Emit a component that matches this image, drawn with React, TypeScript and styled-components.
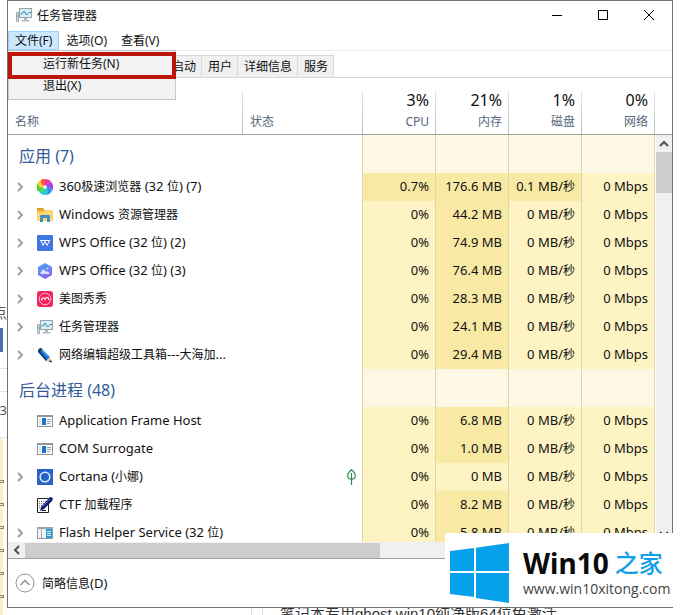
import React from 'react';
import styled, { createGlobalStyle, css } from 'styled-components';

const GlobalStyle = createGlobalStyle`
  * { box-sizing: border-box; }
  body {
    margin: 0;
    background: #fff;
    color: #111;
    font-family: "Noto Sans", "Noto Sans CJK SC", sans-serif;
    font-size: 12px;
  }
  button {
    font: inherit;
    color: inherit;
    background: none;
    border: 0;
    padding: 0;
    margin: 0;
  }
`;

const Page = styled.div`
  position: relative;
  display: grid;
  grid-template-columns: 7px minmax(0, 1fr) 7px;
  grid-template-rows: minmax(0, 1fr) 7px;
  height: 100vh;
  overflow: hidden;
`;

/* Page behind the window */
const BackdropLeft = styled.div`
  grid-row: 1 / 3;
  display: flex;
  flex-direction: column;
  overflow: hidden;
  color: #555;
`;

const Scrap = styled.span<{ $height: number; $size: number }>`
  flex: none;
  display: flex;
  justify-content: flex-end;
  width: 7px;
  height: ${(p) => p.$height}px;
  line-height: ${(p) => p.$height}px;
  font-size: ${(p) => p.$size}px;
`;

const BackdropSpace = styled.div<{ $height: number }>`
  flex: none;
  height: ${(p) => p.$height}px;
`;

const BackdropBlue = styled.div`
  flex: none;
  width: 3px;
  height: 24px;
  background: #4670ae;
`;

const BackdropRule = styled.div<{ $space: number }>`
  flex: none;
  height: 1px;
  margin-bottom: ${(p) => p.$space}px;
  background: #e2e2e2;
`;

const BackdropYellow = styled.div`
  flex: 1;
  display: flex;
  flex-direction: column;
  gap: 22px;
  width: 3px;
  padding-top: 43px;
  background: #fbf1c8;
`;

const YellowMark = styled.div`
  flex: none;
  height: 1px;
  outline: 1px solid #8d8668;
`;

const BackdropBottom = styled.div`
  grid-column: 2 / 4;
  grid-row: 2;
  display: flex;
  overflow: hidden;
  padding-left: 244px;
`;

const BackdropGutter = styled.div`
  flex: none;
  width: 12px;
  border: solid #ddd;
  border-width: 0 1px;
`;

const BackdropText = styled.span`
  margin-left: 17px;
  color: #333;
  font-family: "Liberation Sans", "Noto Sans CJK SC", sans-serif;
  font-size: 15px;
  line-height: 12px;
  white-space: nowrap;
`;

/* Window */
const Window = styled.main`
  grid-column: 2;
  grid-row: 1;
  display: flex;
  flex-direction: column;
  min-height: 0;
  border: 1px solid #6f6f6f;
  background: #fff;
`;

const TitleBar = styled.header`
  flex: none;
  display: flex;
  align-items: center;
  height: 30px;
  padding: 0 0 2px 8px;
`;

const Title = styled.h1`
  flex: 1;
  margin: 0 0 0 5px;
  font-size: 12px;
  font-weight: 400;
`;

const WindowButton = styled.button`
  display: flex;
  align-items: center;
  justify-content: center;
  width: 46px;
  height: 28px;
`;

const MenuBar = styled.nav`
  flex: none;
  position: relative;
  display: flex;
  height: 20px;
  border-bottom: 1px solid #ececec;
`;

const MenuButton = styled.button<{ $open?: boolean }>`
  height: 19px;
  padding: 0 6px;
  line-height: 16px;
  border: 1px solid transparent;
  ${(p) => p.$open && css`
    background: #cce8ff;
    border-color: #99d1ff;
  `}
`;

const Dropdown = styled.div`
  position: absolute;
  z-index: 2;
  top: 19px;
  left: 0;
  display: flex;
  flex-direction: column;
  width: 168px;
  padding: 2px 0;
  background: #f2f2f2;
  border: 1px solid #c8c8c8;
`;

const DropdownItem = styled.button`
  height: 22px;
  padding-left: 34px;
  line-height: 22px;
  text-align: left;
`;

const Highlight = styled.div`
  position: absolute;
  top: 1px;
  left: -1px;
  right: -1px;
  height: 27px;
  border: 4px solid #bd1509;
  pointer-events: none;
`;

const TabStrip = styled.div`
  flex: none;
  display: flex;
  align-items: flex-end;
  height: 27px;
  padding-left: 2px;
  border-bottom: 1px solid #d9d9d9;
`;

const Tab = styled.button<{ $active?: boolean }>`
  height: 22px;
  padding: 0 5px 0 6px;
  line-height: 20px;
  border: solid #d9d9d9;
  border-width: 1px 1px 0 0;
  background: ${(p) => (p.$active ? '#fff' : '#f0f0f0')};
`;

const Body = styled.section`
  flex: 1;
  display: grid;
  grid-template-columns: minmax(0, 1fr) 17px;
  min-height: 0;
  overflow: hidden;
`;

const TableView = styled.div`
  min-height: 0;
  overflow: hidden;
`;

const ProcessTable = styled.table`
  width: 100%;
  table-layout: fixed;
  border-collapse: separate;
  border-spacing: 0;
`;

const StatusCol = styled.col`
  width: 120px;
`;

const MetricCol = styled.col`
  width: 73px;
`;

const HeadCell = styled.th<{ $metric?: boolean }>`
  height: 57px;
  padding: 0 7px 2px;
  vertical-align: bottom;
  text-align: ${(p) => (p.$metric ? 'right' : 'left')};
  color: #56677c;
  font-weight: 400;
  line-height: 20px;
  border-bottom: 1px solid #a0a0a0;
  background: linear-gradient(#e8e8e8, #bcbcbc) right bottom / 1px 43px no-repeat;
`;

const Total = styled.div`
  color: #111;
  font-size: 16px;
  line-height: 24px;
`;

const GroupCell = styled.th`
  height: 38px;
  padding: 4px 0 0 11px;
  text-align: left;
  color: #2f5a9c;
  font-size: 16px;
  font-weight: 400;
  line-height: 24px;
  border-right: 1px solid #ddd5ac;
`;

const NameCell = styled.th`
  height: 28px;
  padding: 0 0 0 8px;
  text-align: left;
  font-size: 13px;
  font-weight: 400;
`;

const NameLine = styled.div`
  display: flex;
  align-items: center;
  white-space: nowrap;
`;

const NameText = styled.span`
  margin: 0 0 2px 6px;
  line-height: 20px;
`;

const Expander = styled.button`
  flex: none;
  display: flex;
  align-items: center;
  width: 21px;
  height: 20px;
`;

const ExpanderSpace = styled.span`
  flex: none;
  width: 21px;
`;

const StatusCell = styled.td`
  padding: 0 6px 0 0;
  line-height: 0;
  text-align: right;
  border-right: 1px solid #ddd5ac;
`;

const shades = { group: '#fdf8e3', low: '#fdf3c3', high: '#f8eaa5' };

const MetricCell = styled.td<{ $shade: keyof typeof shades }>`
  padding: 0 6px 2px 0;
  text-align: right;
  font-size: 13px;
  line-height: 20px;
  white-space: nowrap;
  background: ${(p) => shades[p.$shade]};
  border-right: 1px solid #ddd5ac;
`;

const Han = styled.span`
  font-size: 12px;
`;

const VerticalScroll = styled.div`
  display: flex;
  flex-direction: column;
  min-height: 0;
`;

const ScrollHead = styled.div`
  flex: none;
  height: 57px;
  border-bottom: 1px solid #a0a0a0;
`;

const VerticalTrack = styled.div`
  flex: 1;
  display: flex;
  flex-direction: column;
  margin-left: 1px;
  background: #f0f0f0;
`;

const ScrollArrow = styled.button`
  flex: none;
  display: flex;
  align-items: center;
  justify-content: center;
  width: 16px;
  height: 17px;
`;

const VerticalThumb = styled.div`
  height: 41px;
  margin-bottom: auto;
  background: #cdcdcd;
`;

const HorizontalTrack = styled.div`
  flex: none;
  display: flex;
  align-items: center;
  height: 16px;
  padding: 0 17px 0 1px;
  background: #f0f0f0;
`;

const HorizontalThumb = styled.div`
  width: 55%;
  height: 15px;
  margin-right: auto;
  background: #cdcdcd;
`;

const Footer = styled.footer`
  flex: none;
  display: flex;
  align-items: center;
  height: 49px;
  padding-left: 7px;
  border-top: 1px solid #a0a0a0;
`;

const FewerDetails = styled.button`
  display: flex;
  align-items: center;
  gap: 7px;
  font-size: 13px;
  line-height: 20px;
`;

/* Site badge over the lower right corner */
const SiteBadge = styled.aside`
  position: absolute;
  right: 0;
  bottom: 8px;
  display: flex;
  align-items: center;
  gap: 14px;
  width: 235px;
  height: 74px;
  padding: 6px 0 0 5px;
  background: #fff;
`;

const BadgeText = styled.div`
  display: flex;
  flex-direction: column;
`;

const BadgeName = styled.strong`
  display: flex;
  align-items: center;
  gap: 6px;
  color: #0a0a0a;
  font-size: 28px;
  line-height: 32px;
`;

const BadgeHan = styled.span`
  color: #12a0ea;
  font-size: 24px;
  font-weight: 500;
`;

const BadgeLink = styled.a`
  color: #444;
  font-family: "Open Sans", sans-serif;
  font-size: 14px;
  line-height: 20px;
  text-decoration: none;
`;

/* Drawings */
const MonitorIcon = () => (
  <svg width="16" height="16" viewBox="0 0 16 16" aria-hidden="true">
    <rect x="3.5" y="1.5" width="12" height="9" fill="#d5f0f8" stroke="#98a3a9" />
    <path d="M4.500 7h1.500L8 4l2.500 4L13 5.500h2" fill="none" stroke="#2f86a6" />
    <path d="M8 11h3v2H8zM5.500 13h8v1.500h-8z" fill="#b3bcc0" />
    <path d="M0.500 5.500h2v9h-2z" fill="#dde3e5" stroke="#a2abb0" />
    <path d="M1 9h1" stroke="#4aa35a" />
  </svg>
);

const BrowserIcon = () => (
  <svg width="16" height="16" viewBox="0 0 16 16" aria-hidden="true">
    <path d="M8 8C6 6 6 2 9 0a8 8 0 0 1 6 4C12 3 9 5 8 8z" fill="#f2338e" />
    <path d="M8 8c1-3 4-5 7-4a8 8 0 0 1 0 8C15 9 12 7 8 8z" fill="#a63fe6" />
    <path d="M8 8c4-1 7 1 7 4a8 8 0 0 1-6 4c2-2 2-6-1-8z" fill="#2f8df0" />
    <path d="M8 8c3 2 3 6 1 8a8 8 0 0 1-7.500-4C4 13 7 11 8 8z" fill="#25cfc0" />
    <path d="M8 8c-1 3-4 5-7.500 4a8 8 0 0 1 0-8C1 7 4 9 8 8z" fill="#54d431" />
    <path d="M8 8C4 9 1 7 0.500 4A8 8 0 0 1 4 1c-1 3 1 6 4 7z" fill="#fbd316" />
    <path d="M8 8C5 7 3 4 4 1a8 8 0 0 1 5-1C6 2 6 6 8 8z" fill="#fb5a2b" />
    <circle cx="8" cy="8" r="1.800" fill="#fff" />
  </svg>
);

const FolderIcon = () => (
  <svg width="16" height="16" viewBox="0 0 16 16" aria-hidden="true">
    <path d="M0 1h6l1.500 2H0z" fill="#e29b22" />
    <path d="M0 3h16v11H0z" fill="#fbd570" />
    <path d="M0 3h7v1.500H0z" fill="#e9ad38" />
    <path d="M3 15V9q0-1 1-1h8q1 0 1 1v6h-3v-4H6v4z" fill="#3f8fc4" />
  </svg>
);

const WpsIcon = () => (
  <svg width="16" height="16" viewBox="0 0 16 16" aria-hidden="true">
    <rect width="16" height="16" rx="1" fill="#4175e4" />
    <path d="M3 5.500h10M4 5.500L6 10.500 8 6.500 10 10.500 12.500 5.500" fill="none" stroke="#fff" />
  </svg>
);

const WpsHexIcon = () => (
  <svg width="16" height="16" viewBox="0 0 16 16" aria-hidden="true">
    <defs>
      <linearGradient id="hex" x2="0.600" y2="1">
        <stop stopColor="#43aafa" />
        <stop offset="1" stopColor="#8a62ea" />
      </linearGradient>
    </defs>
    <path d="M8 0l7 4v8l-7 4-7-4V4z" fill="url(#hex)" />
    <path d="M3.500 11V9.500L6.500 6l3 3 1-1 2 2v1z" fill="#d5e2ff" />
    <circle cx="10.500" cy="5.500" r="1" fill="#d5e2ff" />
  </svg>
);

const MeituIcon = () => (
  <svg width="16" height="16" viewBox="0 0 16 16" aria-hidden="true">
    <rect width="16" height="16" rx="3" fill="#f1265f" />
    <circle cx="8" cy="8" r="5.800" fill="none" stroke="#ffb3c6" />
    <path d="M4.500 9.500q0-2.500 2-2.500t1.500 2q0-2.500 2-2.500t1.500 2.500" fill="none" stroke="#fff" strokeWidth="1.200" />
  </svg>
);

const PenIcon = () => (
  <svg width="16" height="16" viewBox="0 0 16 16" aria-hidden="true">
    <path d="M4 1l9 9-4 4L1 5z" fill="#1672cf" />
    <path d="M1 4.500l8 9.500 1-1.200L2 3z" fill="#123b70" />
    <path d="M1 4.500Q1 1 4 1l1.500 1.500L2.500 6z" fill="#18385f" />
    <path d="M4.500 3l7 7" stroke="#6db7f5" />
    <path d="M13 10l2 5.500L9 14z" fill="#e3c5a2" />
    <path d="M14 13l1 2.500-3-1z" fill="#222" />
  </svg>
);

const AppFrameIcon = () => (
  <svg width="16" height="16" viewBox="0 0 16 16" aria-hidden="true">
    <rect x="0.500" y="2.500" width="15" height="11" fill="#f8fafb" stroke="#8f979c" />
    <path d="M0 2h16v2H0z" fill="#8f979c" />
    <rect x="5" y="5" width="4" height="7" fill="#1c74c4" />
    <path d="M10 6.500h4M10 8.500h4M10 10.500h3" stroke="#9aa1a5" />
    <path d="M2 5h2v7H2z" fill="#e2e7ea" />
  </svg>
);

const CortanaIcon = () => (
  <svg width="16" height="16" viewBox="0 0 16 16" aria-hidden="true">
    <rect width="16" height="16" fill="#2a62c4" />
    <circle cx="8" cy="8" r="4.800" fill="none" stroke="#d7ecff" strokeWidth="1.600" />
  </svg>
);

const CtfIcon = () => (
  <svg width="16" height="16" viewBox="0 0 16 16" aria-hidden="true">
    <path d="M0.500 1.500h11v14h-11z" fill="#fff" stroke="#222" />
    <path d="M2 4.500h8M2 6.500h7M2 8.500h5M2 10.500h3" stroke="#777" strokeDasharray="1 1" />
    <path d="M13 0l3 1-1 3-8 8-4 2 1-4z" fill="#101a6e" />
    <path d="M13 2L6 9" stroke="#5a72d8" />
    <path d="M5 13.500h4" stroke="#111" />
  </svg>
);

const FlashIcon = () => (
  <svg width="16" height="16" viewBox="0 0 16 16" aria-hidden="true">
    <rect x="0.500" y="2.500" width="15" height="11" fill="#f3f6f7" stroke="#8f979c" />
    <path d="M0 2h16v2H0z" fill="#9da5a9" />
    <path d="M4.500 4v9" stroke="#a5adb1" />
    <rect x="9" y="4" width="6" height="9" fill="#2f9bd8" />
    <path d="M10 6.500h4M10 8.500h4M10 10.500h4" stroke="#d5effb" />
  </svg>
);

const LeafIcon = () => (
  <svg width="9" height="16" viewBox="0 0 9 16" role="img" aria-label="效率模式">
    <path d="M4.500 0.700Q8.500 4 8.300 7 8 10 4.500 10.500 1 10 0.700 7 0.500 4 4.500 0.700zM4.500 4v12" fill="none" stroke="#2c8a4a" strokeWidth="1.200" />
  </svg>
);

const ChevronIcon = () => (
  <svg width="8" height="10" viewBox="0 0 8 10" aria-hidden="true">
    <path d="M2 1l4 4-4 4" fill="none" stroke="#a0a0a0" strokeWidth="2" />
  </svg>
);

const arrows = { up: 'M1 7l4-4 4 4', down: 'M1 3l4 4 4-4', left: 'M7 1L3 5l4 4' };

const ArrowIcon = ({ to }: { to: keyof typeof arrows }) => (
  <svg width="10" height="10" viewBox="0 0 10 10" aria-hidden="true">
    <path d={arrows[to]} fill="none" stroke="#505050" strokeWidth="2" />
  </svg>
);

const CircleUpIcon = () => (
  <svg width="20" height="20" viewBox="0 0 20 20" aria-hidden="true">
    <circle cx="10" cy="10" r="9" fill="#fff" stroke="#929292" />
    <path d="M5.500 12L10 7.500l4.500 4.500" fill="none" stroke="#929292" strokeWidth="1.500" />
  </svg>
);

const WindowsLogo = () => (
  <svg width="59" height="60" viewBox="0 0 59 60" aria-hidden="true">
    <path d="M0 8l24-3v23H0zM26 4.700L59 0v28H26zM0 30h24v24L0 51zM26 30h33v30l-33-5z" fill="#06a1ea" />
  </svg>
);

/* Chinese glyphs are set one size below the Latin text beside them. */
const Mixed = ({ text }: { text: string }) => (
  <>
    {text.split(/([\u4e00-\u9fff]+)/).filter(Boolean).map((part, i) =>
      /[\u4e00-\u9fff]/.test(part) ? <Han key={i}>{part}</Han> : part,
    )}
  </>
);

type Process = {
  name: string;
  icon: React.ComponentType;
  memory: string;
  cpu?: string;
  disk?: string;
  child?: boolean;
  leaf?: boolean;
};

const groups: { title: string; rows: Process[] }[] = [
  {
    title: '应用 (7)',
    rows: [
      { name: '360极速浏览器 (32 位) (7)', icon: BrowserIcon, cpu: '0.7%', memory: '176.6 MB', disk: '0.1 MB/秒', child: true },
      { name: 'Windows 资源管理器', icon: FolderIcon, memory: '44.2 MB', child: true },
      { name: 'WPS Office (32 位) (2)', icon: WpsIcon, memory: '74.9 MB', child: true },
      { name: 'WPS Office (32 位) (3)', icon: WpsHexIcon, memory: '76.4 MB', child: true },
      { name: '美图秀秀', icon: MeituIcon, memory: '28.3 MB', child: true },
      { name: '任务管理器', icon: MonitorIcon, memory: '24.1 MB', child: true },
      { name: '网络编辑超级工具箱---大海加...', icon: PenIcon, memory: '29.4 MB', child: true },
    ],
  },
  {
    title: '后台进程 (48)',
    rows: [
      { name: 'Application Frame Host', icon: AppFrameIcon, memory: '6.8 MB' },
      { name: 'COM Surrogate', icon: AppFrameIcon, memory: '1.0 MB' },
      { name: 'Cortana (小娜)', icon: CortanaIcon, memory: '0 MB', child: true, leaf: true },
      { name: 'CTF 加载程序', icon: CtfIcon, memory: '8.2 MB' },
      { name: 'Flash Helper Service (32 位)', icon: FlashIcon, memory: '5.8 MB', child: true },
    ],
  },
];

const totals = [
  ['3%', 'CPU'],
  ['21%', '内存'],
  ['1%', '磁盘'],
  ['0%', '网络'],
];

const tabs = ['进程', '性能', '应用历史记录', '启动', '用户', '详细信息', '服务'];

const Metric = ({ value }: { value: string }) => (
  <MetricCell $shade={value.startsWith('0 ') || value === '0%' ? 'low' : 'high'}>
    <Mixed text={value} />
  </MetricCell>
);

const ProcessRow = ({ row }: { row: Process }) => {
  const Icon = row.icon;
  return (
    <tr>
      <NameCell scope="row">
        <NameLine>
          {row.child ? (
            <Expander aria-label={`展开 ${row.name}`}><ChevronIcon /></Expander>
          ) : (
            <ExpanderSpace />
          )}
          <Icon />
          <NameText><Mixed text={row.name} /></NameText>
        </NameLine>
      </NameCell>
      <StatusCell>{row.leaf && <LeafIcon />}</StatusCell>
      <Metric value={row.cpu ?? '0%'} />
      <Metric value={row.memory} />
      <Metric value={row.disk ?? '0 MB/秒'} />
      <Metric value="0 Mbps" />
    </tr>
  );
};

export default function App() {
  return (
    <Page>
      <GlobalStyle />
      <BackdropLeft aria-hidden="true">
        <BackdropSpace $height={303} />
        <Scrap $height={18} $size={15}>点</Scrap>
        <BackdropSpace $height={7} />
        <BackdropBlue />
        <BackdropSpace $height={16} />
        <BackdropRule $space={22} />
        <BackdropRule $space={10} />
        <Scrap $height={16} $size={13}>3</Scrap>
        <BackdropSpace $height={19} />
        <BackdropRule $space={0} />
        <BackdropYellow>
          {[0, 1, 2, 3, 4, 5].map((n) => <YellowMark key={n} />)}
        </BackdropYellow>
      </BackdropLeft>

      <Window>
        <TitleBar>
          <MonitorIcon />
          <Title>任务管理器</Title>
          <WindowButton aria-label="最小化">
            <svg width="10" height="10" viewBox="0 0 10 10"><path d="M0 5.500h10" stroke="#000" /></svg>
          </WindowButton>
          <WindowButton aria-label="最大化">
            <svg width="10" height="10" viewBox="0 0 10 10"><path d="M0.500 0.500h9v9h-9z" fill="none" stroke="#000" /></svg>
          </WindowButton>
          <WindowButton aria-label="关闭">
            <svg width="10" height="10" viewBox="0 0 10 10"><path d="M0 0l10 10M10 0L0 10" stroke="#000" /></svg>
          </WindowButton>
        </TitleBar>

        <MenuBar>
          <MenuButton $open aria-expanded="true">文件(F)</MenuButton>
          <MenuButton>选项(O)</MenuButton>
          <MenuButton>查看(V)</MenuButton>
          <Dropdown>
            <DropdownItem>运行新任务(N)</DropdownItem>
            <DropdownItem>退出(X)</DropdownItem>
            <Highlight />
          </Dropdown>
        </MenuBar>

        <TabStrip>
          {tabs.map((tab, i) => <Tab key={tab} $active={i === 0}>{tab}</Tab>)}
        </TabStrip>

        <Body>
          <TableView>
            <ProcessTable>
              <colgroup>
                <col />
                <StatusCol />
                {totals.map(([, label]) => <MetricCol key={label} />)}
              </colgroup>
              <thead>
                <tr>
                  <HeadCell scope="col">名称</HeadCell>
                  <HeadCell scope="col">状态</HeadCell>
                  {totals.map(([total, label]) => (
                    <HeadCell key={label} scope="col" $metric>
                      <Total>{total}</Total>
                      {label}
                    </HeadCell>
                  ))}
                </tr>
              </thead>
              {groups.map((group) => (
                <tbody key={group.title}>
                  <tr>
                    <GroupCell colSpan={2} scope="rowgroup">{group.title}</GroupCell>
                    {totals.map(([, label]) => <MetricCell key={label} $shade="group" />)}
                  </tr>
                  {group.rows.map((row) => <ProcessRow key={row.name} row={row} />)}
                </tbody>
              ))}
            </ProcessTable>
          </TableView>
          <VerticalScroll>
            <ScrollHead />
            <VerticalTrack>
              <ScrollArrow aria-label="向上滚动"><ArrowIcon to="up" /></ScrollArrow>
              <VerticalThumb />
              <ScrollArrow aria-label="向下滚动"><ArrowIcon to="down" /></ScrollArrow>
            </VerticalTrack>
          </VerticalScroll>
        </Body>

        <HorizontalTrack>
          <ScrollArrow aria-label="向左滚动"><ArrowIcon to="left" /></ScrollArrow>
          <HorizontalThumb />
        </HorizontalTrack>

        <Footer>
          <FewerDetails>
            <CircleUpIcon />
            <span><Mixed text="简略信息(D)" /></span>
          </FewerDetails>
        </Footer>
      </Window>

      <BackdropBottom>
        <BackdropGutter />
        <BackdropText>笔记本专用ghost win10纯净版64位免激活</BackdropText>
      </BackdropBottom>

      <SiteBadge>
        <WindowsLogo />
        <BadgeText>
          <BadgeName>Win10<BadgeHan>之家</BadgeHan></BadgeName>
          <BadgeLink href="#">www.win10xitong.com</BadgeLink>
        </BadgeText>
      </SiteBadge>
    </Page>
  );
}
